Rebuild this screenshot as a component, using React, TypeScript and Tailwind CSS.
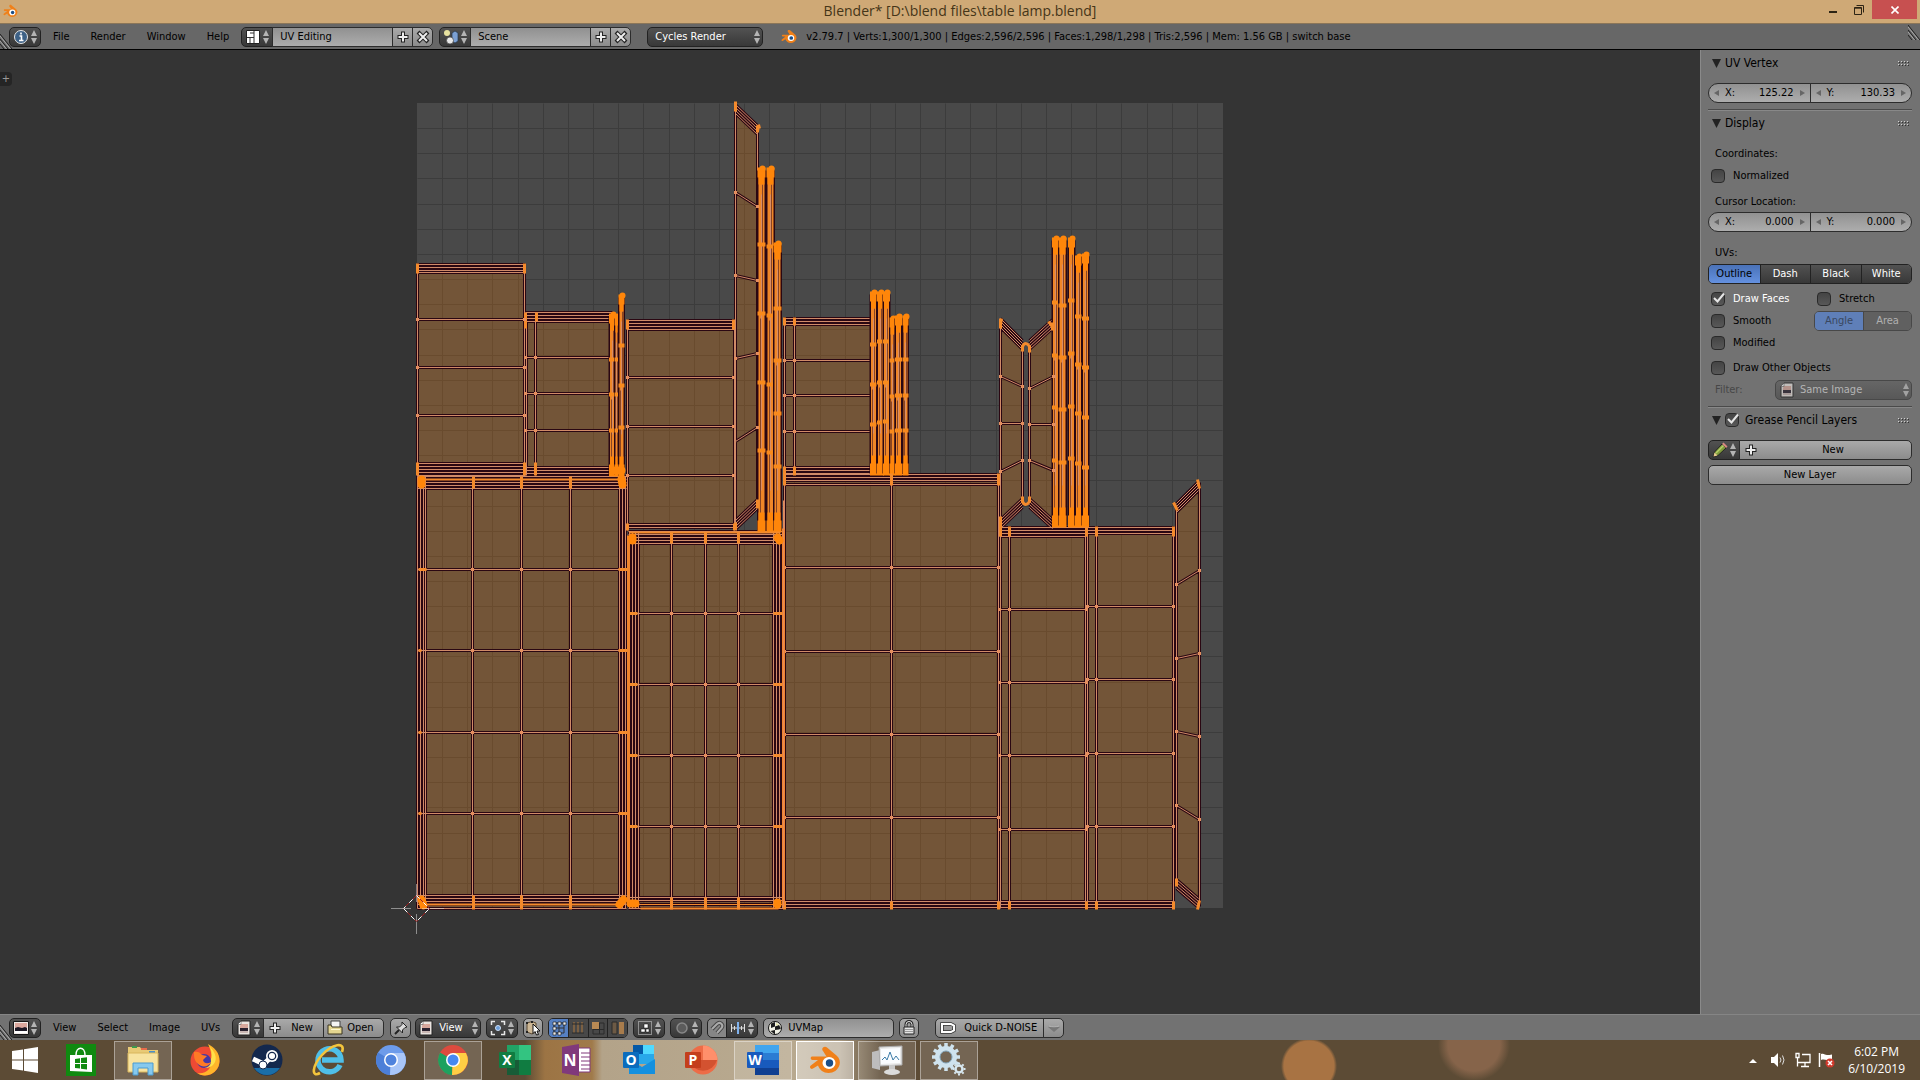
import type { ReactNode } from "react"

type Point = [number, number]
type Segment = [number, number, number, number]

const darkBox = "bg-gradient-to-b from-[#525252] to-[#383838] border border-[#222]"
const lightBox = "bg-gradient-to-b from-[#a9a9a9] to-[#8c8c8c] border border-[#2c2c2c]"
const fieldBox = "bg-gradient-to-b from-[#919191] to-[#adadad] border border-[#2c2c2c]"

/* ---------- UV layout data ---------- */

const GRID = { x: 417, y: 103, size: 805, cells: 32 }

const faces: Point[][] = [
  [[417, 264], [525, 264], [525, 474], [417, 474]],
  [[525, 312], [612, 314], [612, 476], [525, 476]],
  [[627, 320], [734, 320], [734, 528], [627, 528]],
  [[735, 103], [757, 126], [757, 502], [735, 528]],
  [[784, 317], [871, 317], [871, 474], [784, 474]],
  [[784, 474], [999, 474], [999, 908], [784, 908]],
  [[417, 476], [626, 476], [626, 908], [417, 908]],
  [[628, 530], [783, 530], [783, 908], [628, 908]],
  [[1000, 318], [1022, 344], [1022, 500], [1000, 525]],
  [[1029, 344], [1053, 321], [1053, 525], [1029, 500]],
  [[999, 526], [1086, 526], [1086, 908], [999, 908]],
  [[1086, 526], [1174, 526], [1174, 908], [1086, 908]],
  [[1176, 503], [1199, 480], [1199, 908], [1176, 880]],
]

const h = (x1: number, x2: number, ...ys: number[]): Segment[] => ys.map((y) => [x1, y, x2, y])
const v = (y1: number, y2: number, ...xs: number[]): Segment[] => xs.map((x) => [x, y1, x, y2])
const slant = (x1: number, y1: number, x2: number, y2: number, count: number): Segment[] =>
  Array.from({ length: count }, (_, i) => [x1, y1 + i * 3, x2, y2 + i * 3])

const edges: Segment[] = [
  ...h(417, 525, 264, 267, 270, 272, 319, 367, 415, 463, 466, 469, 472, 475),
  ...v(264, 476, 417, 524),
  ...h(525, 612, 312, 315, 318, 321, 357, 393, 430, 467, 470, 473, 476),
  ...v(312, 475, 526, 535),
  ...h(627, 734, 320, 323, 326, 329, 377, 426, 475, 524, 527),
  ...v(320, 530, 627, 734),
  ...v(105, 528, 735),
  ...v(126, 505, 757),
  ...slant(735, 104, 757, 125, 4),
  [735, 192, 757, 206], [735, 275, 757, 280], [735, 358, 757, 353], [735, 441, 757, 427],
  ...slant(735, 520, 757, 499, 4),
  ...h(784, 871, 318, 321, 324, 360, 395, 431, 467, 470, 473),
  ...v(318, 474, 784, 794),
  ...h(784, 999, 474, 477, 480, 484, 567, 651, 734, 817, 901, 904, 907),
  ...v(474, 908, 784, 891, 998),
  ...h(417, 626, 476, 479, 482, 485, 488, 569, 650, 732, 813, 895, 898, 901, 904, 908),
  ...v(476, 908, 417, 420, 423, 425, 472, 521, 570, 619, 622, 625),
  ...h(628, 783, 531, 534, 537, 540, 543, 613, 684, 755, 826, 897, 900, 904, 908),
  ...v(531, 908, 629, 632, 635, 638, 671, 705, 738, 773, 776, 779, 782),
  ...v(320, 526, 1000),
  ...v(345, 502, 1022, 1029),
  ...v(322, 526, 1053),
  ...slant(1000, 318, 1022, 340, 4),
  ...slant(1029, 340, 1052, 319, 4),
  [1000, 376, 1022, 386], [1000, 423, 1022, 423], [1000, 471, 1022, 460],
  [1029, 388, 1053, 376], [1029, 424, 1053, 424], [1029, 460, 1053, 470],
  ...slant(1000, 519, 1022, 498, 4),
  ...slant(1029, 498, 1052, 519, 4),
  ...h(999, 1086, 527, 530, 533, 536, 609, 682, 755, 829, 901, 904, 907),
  ...v(527, 908, 1000, 1009, 1085),
  ...h(1086, 1174, 527, 530, 533, 606, 679, 753, 826, 901, 904, 907),
  ...v(527, 908, 1087, 1096, 1173),
  ...v(505, 882, 1176),
  ...v(482, 906, 1199),
  ...slant(1176, 503, 1198, 481, 4),
  [1176, 584, 1199, 570], [1176, 658, 1199, 653], [1176, 731, 1199, 736], [1176, 805, 1199, 819],
  ...slant(1176, 879, 1198, 898, 4),
]

// tall thin strips, packed so tightly that only the selected edges show
const strips = [
  { x: 612, w: 5, top: 316, bottom: 474, nodes: [359, 394, 430] },
  { x: 616, w: 2, top: 318, bottom: 474, nodes: [359, 394, 430] },
  { x: 621, w: 4, top: 297, bottom: 474, nodes: [345, 385, 427] },
  { x: 761, w: 6, top: 170, bottom: 530, nodes: [244, 313, 382, 450] },
  { x: 770, w: 6, top: 170, bottom: 530, nodes: [246, 315, 384, 452] },
  { x: 777, w: 6, top: 245, bottom: 530, nodes: [308, 360, 413, 466] },
  { x: 873, w: 5, top: 294, bottom: 473, nodes: [344, 384, 424] },
  { x: 880, w: 5, top: 294, bottom: 473, nodes: [341, 382, 422] },
  { x: 886, w: 5, top: 294, bottom: 473, nodes: [341, 382, 421] },
  { x: 892, w: 4, top: 320, bottom: 473, nodes: [360, 396, 431] },
  { x: 898, w: 5, top: 318, bottom: 473, nodes: [359, 395, 430] },
  { x: 905, w: 4, top: 318, bottom: 473, nodes: [359, 395, 430] },
  { x: 1055, w: 5, top: 240, bottom: 525, nodes: [302, 355, 407, 460] },
  { x: 1062, w: 6, top: 240, bottom: 525, nodes: [305, 357, 409, 462] },
  { x: 1071, w: 5, top: 240, bottom: 525, nodes: [300, 353, 406, 458] },
  { x: 1078, w: 5, top: 258, bottom: 525, nodes: [316, 364, 413, 463] },
  { x: 1085, w: 5, top: 256, bottom: 525, nodes: [318, 367, 417, 467] },
]

// corners and joints where many vertices overlap
const joints: Segment[] = [
  ...v(263, 273, 417, 524), ...v(312, 328, 525), ...v(312, 321, 536), ...v(462, 475, 417, 524, 535),
  ...v(319, 329, 627, 733), ...v(523, 530, 627, 734), ...v(101, 111, 735), ...v(125, 132, 757),
  ...v(499, 508, 757), ...v(522, 530, 735), ...v(317, 325, 784, 794), ...v(466, 475, 784, 794),
  ...v(473, 485, 784, 891, 998), ...v(901, 909, 784, 891, 998, 1009, 1086, 1096, 1173),
  ...v(476, 488, 473, 521, 570), ...v(895, 909, 473, 521, 570),
  ...v(532, 543, 671, 705, 738), ...v(897, 909, 671, 705, 738),
  ...v(318, 328, 1000), ...v(322, 330, 1052), ...v(516, 536, 1000), ...v(526, 536, 1009, 1086, 1096, 1173),
  [1173, 502, 1177, 510], [1197, 479, 1199, 488], [1176, 878, 1176, 886], [1199, 900, 1197, 909],
  [1001, 318, 1000, 324], [1048, 321, 1053, 328],
  [758, 124, 759, 128], [757, 131, 758, 125],
  ...h(418, 426, 569), ...h(418, 421, 650, 732, 813), ...h(618, 628, 569, 650, 732, 813),
  ...h(629, 637, 613, 684, 755, 826), ...h(773, 783, 613, 684, 755, 826),
]

const vertices: Point[] = [
  ...[319, 367, 415].flatMap((y): Point[] => [[417, y], [524, y]]),
  ...[357, 393, 430].flatMap((y): Point[] => [[525, y], [535, y]]),
  ...[377, 426, 475].flatMap((y): Point[] => [[627, y], [733, y]]),
  ...[360, 395, 431].flatMap((y): Point[] => [[784, y], [794, y]]),
  ...[567, 651, 734, 817].flatMap((y): Point[] => [[784, y], [891, y], [998, y]]),
  ...[569, 650, 732, 813].flatMap((y): Point[] => [[472, y], [521, y], [570, y]]),
  ...[613, 684, 755, 826].flatMap((y): Point[] => [[671, y], [705, y], [738, y]]),
  ...[609, 682, 755, 829].flatMap((y): Point[] => [[999, y], [1009, y], [1086, y]]),
  ...[606, 679, 753, 826].flatMap((y): Point[] => [[1087, y], [1096, y], [1173, y]]),
  [735, 192], [757, 206], [735, 275], [757, 280], [735, 358], [757, 353], [757, 427],
  [1000, 376], [1022, 386], [1000, 423], [1022, 423], [1000, 471], [1022, 460],
  [1029, 388], [1053, 376], [1029, 424], [1053, 424], [1029, 460], [1053, 470],
  [1176, 584], [1199, 570], [1176, 658], [1199, 653], [1176, 731], [1199, 736], [1176, 805], [1199, 819],
]

const toPath = (segments: Segment[]) => segments.map(([a, b, c, d]) => `M${a} ${b}L${c} ${d}`).join("")

function UvCanvas() {
  const step = GRID.size / GRID.cells
  const gridLines: Segment[] = []
  for (let i = 1; i < GRID.cells; i++) {
    const p = Math.round(i * step)
    gridLines.push([GRID.x + p, GRID.y, GRID.x + p, GRID.y + GRID.size])
    gridLines.push([GRID.x, GRID.y + p, GRID.x + GRID.size, GRID.y + p])
  }
  const edgePath = toPath(edges)

  return (
    <svg viewBox="0 50 1700 964" className="block h-full w-full" role="img" aria-label="UV layout">
      <rect x={GRID.x} y={GRID.y} width={806} height={805} fill="#494949" />
      <g transform="translate(.5 .5)" fill="none">
        <path d={toPath(gridLines)} stroke="#3c3c3c" />
        <g fill="#ff7d00" fillOpacity=".23">
          {faces.map((points, i) => (
            <polygon key={i} points={points.join(" ")} />
          ))}
        </g>
        <path d={edgePath} stroke="#2a0712" strokeWidth="3" />
        <path d={edgePath} stroke="#d08a68" />

        {/* packed strips */}
        {strips.map(({ x, w, top, bottom, nodes }) => (
          <g key={x}>
            <path d={`M${x} ${top}V${bottom}`} stroke="#2a0712" strokeWidth={w + 3} />
            <path d={`M${x} ${top}V${bottom}`} stroke="#ef8628" strokeWidth={w} />
            <path d={`M${x + 1} ${top + 14}V${nodes[1]}M${x - 1} ${nodes[1] + 5}V${bottom - 14}`} stroke="#8a4522" />
            <path d={`M${x} ${top + 24}V${bottom - 40}`} stroke="#d98d66" />
            {nodes.map((y) => (
              <path key={y} d={`M${x - w / 2 - 1} ${y}H${x + w / 2 + 1}`} stroke="#f98a1c" strokeWidth="4" />
            ))}
            <path
              d={`M${x} ${top - 3}V${top + 7}M${x} ${bottom - 10}V${bottom + 2}`}
              stroke="#ff860a"
              strokeWidth={w + 2}
            />
            <path d={`M${x} ${top + 5}V${top + 14}M${x} ${bottom - 18}V${bottom - 8}`} stroke="#ff860a" strokeWidth={w} />
            <circle cx={x + 1} cy={top - 2} r="3" fill="#ff860a" />
          </g>
        ))}

        <path d={toPath(joints)} stroke="#f48a2c" strokeWidth="3" />
        {vertices.map(([x, y], i) => (
          <rect key={i} x={x - 1.5} y={y - 1.5} width="3" height="3" fill="#e58e5e" />
        ))}
        <path
          d="M1022 351V346Q1025 340 1029 346V352M1022 496V501Q1025 507 1029 501V496"
          stroke="#f48a2c"
          strokeWidth="3"
        />

        {/* seams between the big islands */}
        <path d="M628 535V905M783 528V905" stroke="#f0852e" strokeWidth="3" />
        <path d="M629 532H780M640 908H778M424 479H620M426 904H616" stroke="#f48a2c" strokeWidth="2" />
        <path d="M640 904H778" stroke="#f48a2c" />
        <path d="M783 500V906" stroke="#e8895a" />
        <g stroke="#ff860a" strokeWidth="8" strokeLinecap="round">
          <path d="M421 479V484M421 899L423 905M621 479L622 484M619 904L623 899" />
          <path d="M632 537V540M777 537L779 540M630 903H635M777 902V904" />
          <path d="M614 470H621" />
        </g>

        {/* 2D cursor */}
        <path d="M391 908H411M422 908H443M416 884V902M416 914V934" stroke="#e8e8e8" strokeDasharray="1 1" />
        <path d="M403 908L416 895L429 908L416 921Z" stroke="#a02020" />
        <path d="M403 908L416 895L429 908L416 921Z" stroke="#fff" strokeDasharray="5 5" strokeDashoffset="2" />
      </g>
    </svg>
  )
}

/* ---------- small drawings ---------- */

function UpDown({ className = "" }: { className?: string }) {
  return (
    <svg viewBox="0 0 6 14" className={`h-[14px] w-[6px] shrink-0 fill-[#b4b4b4] ${className}`} aria-hidden="true">
      <path d="M3 0L6 6H0ZM3 14L6 8H0Z" />
    </svg>
  )
}

function Icon({ children }: { children: ReactNode }) {
  return (
    <svg viewBox="0 0 16 16" className="size-4 shrink-0" fill="none" aria-hidden="true">
      {children}
    </svg>
  )
}

const PlusIcon = () => (
  <Icon>
    <path d="M8 2.5v11M2.5 8h11" stroke="#222" strokeWidth="4" />
    <path d="M8 3.5v9M3.5 8h9" stroke="#eee" strokeWidth="2" />
  </Icon>
)

const CrossIcon = () => (
  <Icon>
    <path d="M3 3l10 10M13 3L3 13" stroke="#222" strokeWidth="4" />
    <path d="M4 4l8 8M12 4l-8 8" stroke="#eee" strokeWidth="2" />
  </Icon>
)

const ImageIcon = () => (
  <Icon>
    <path d="M5 1h9v14H2V4Z" fill="#e9e4e0" stroke="#222" />
    <path d="M5 4h7v4H4V6Z" fill="#d7a79c" />
    <path d="M4 8h8v3H4Z" fill="#2a2230" />
    <path d="M4 11h8v2H4Z" fill="#c9b7b4" />
    <path d="M1.5 4.5L5 1v3.5Z" fill="#fff" stroke="#333" strokeWidth=".5" />
  </Icon>
)

const ImageEditorIcon = () => (
  <Icon>
    <path d="M.5 1.5h15v13H.5Z" fill="#f0e9e6" stroke="#181818" />
    <path d="M2 3h12v5H2Z" fill="#dba79d" />
    <path d="M2 8l3-1 4 1 3-1 2 1v3H2Z" fill="#1d1926" />
    <path d="M2 11h12v2H2Z" fill="#fff" />
  </Icon>
)

const BlenderIcon = ({ className }: { className: string }) => (
  <svg viewBox="0 0 32 30" className={className} fill="none" aria-hidden="true">
    <path
      d="M14 2.5c1-1 3-1 4 0l9.500 8c3 2.500 4 6 3 9.500-1.500 5-6 8-11 8s-9-3-10.500-7.500L4 23.500c-2 1.500-4-1-2.500-2.700L9 15H3.500c-2 0-2.500-3-.5-3.500h14.500L14 6c-1-1-1-2.500 0-3.500Z"
      fill="#f08019"
    />
    <ellipse cx="20" cy="18" rx="6.5" ry="6" fill="#fff" />
    <circle cx="20.5" cy="18" r="3.7" fill="#1b4e87" />
  </svg>
)

const Corner = () => (
  <svg viewBox="0 0 12 16" className="h-4 w-3" aria-hidden="true">
    <path d="M0 1L12 16M0 6L8 16M0 11L4 16" stroke="#222" />
    <path d="M0 3L10.500 16M0 8L6.500 16" stroke="#aaa" />
  </svg>
)

function MenuButtons({ items }: { items: string[] }) {
  return (
    <nav className="ml-3 flex gap-[21px]">
      {items.map((item) => (
        <button key={item} type="button">
          {item}
        </button>
      ))}
    </nav>
  )
}

function Selector({ label, children, className = "rounded-[5px]" }: { label: string; children: ReactNode; className?: string }) {
  return (
    <button
      type="button"
      aria-label={label}
      className={`flex h-5 w-8 shrink-0 items-center justify-center gap-[2px] ${darkBox} ${className}`}
    >
      {children}
      <UpDown />
    </button>
  )
}

function DataBlock({ label, value, icon }: { label: string; value: string; icon: ReactNode }) {
  return (
    <div className="flex">
      <Selector label={`Browse ${label}`} className="rounded-l-[5px]">
        {icon}
      </Selector>
      <input aria-label={label} defaultValue={value} className={`-ml-px h-5 w-[121px] px-[7px] ${fieldBox}`} />
      <button type="button" aria-label={`Add ${label}`} className={`-ml-px flex h-5 w-[21px] items-center justify-center ${lightBox}`}>
        <PlusIcon />
      </button>
      <button
        type="button"
        aria-label={`Delete ${label}`}
        className={`-ml-px flex h-5 w-[21px] items-center justify-center rounded-r-[5px] ${lightBox}`}
      >
        <CrossIcon />
      </button>
    </div>
  )
}

/* ---------- window title and info header ---------- */

function TitleBar() {
  return (
    <header className="relative h-[23px] shrink-0 bg-[#cfa976] font-['Open_Sans','Noto_Sans',sans-serif]">
      <BlenderIcon className="absolute top-1 left-[3px] h-[14px] w-[15px]" />
      <h1 className="text-center text-[14px] leading-[22px] text-[#453518]">Blender* [D:\blend files\table lamp.blend]</h1>
      <div className="absolute top-0 right-[3px] flex h-[19px]">
        <button type="button" aria-label="Minimize" className="flex w-[26px] items-center justify-center">
          <span className="mt-1 h-[2px] w-2 bg-[#2d2414]" />
        </button>
        <button type="button" aria-label="Restore" className="flex w-[26px] items-center justify-center">
          <svg viewBox="0 0 10 10" className="size-[10px]" fill="none" stroke="#2d2414" aria-hidden="true">
            <path d="M.5 2.5h7v7h-7Z" />
            <path d="M.5 3.2h7" />
            <path d="M2.5 .5h7v7" />
          </svg>
        </button>
        <button type="button" aria-label="Close" className="flex w-[45px] items-center justify-center bg-[#c75050]">
          <svg viewBox="0 0 8 8" className="size-2" stroke="#fff" strokeWidth="1.6" aria-hidden="true">
            <path d="M.5 .5l7 7M7.5 .5l-7 7" />
          </svg>
        </button>
      </div>
    </header>
  )
}

function InfoHeader() {
  return (
    <div className="relative flex h-[27px] shrink-0 items-center border-t border-b border-t-[#8b7659] border-b-black bg-[#676767] pl-[9px]">
      <span className="absolute bottom-0 left-0">
        <Corner />
      </span>
      <Selector label="Editor type">
        <Icon>
          <circle cx="8" cy="8" r="6.5" fill="#3d6186" stroke="#e6e6e6" />
          <path d="M8 3.5v2M6.5 7h2v4M6 11.5h4.5" stroke="#fff" strokeWidth="1.6" />
        </Icon>
      </Selector>
      <MenuButtons items={["File", "Render", "Window", "Help"]} />
      <div className="ml-3 flex gap-[6px]">
        <DataBlock
          label="screen layout"
          value="UV Editing"
          icon={
            <Icon>
              <path d="M1.5 1.5h13v13h-13Z" fill="#fff" stroke="#222" />
              <path d="M9 2v12M2 8.500h7M5 8.500v5.500M5 4h4" stroke="#333" />
            </Icon>
          }
        />
        <DataBlock
          label="scene"
          value="Scene"
          icon={
            <Icon>
              <circle cx="4" cy="4" r="3" fill="#e7e2a0" />
              <path d="M9 4l3-2 3 2v8l-3 2-3-2Z" fill="#7ba0d4" stroke="#24384f" strokeWidth=".7" />
              <circle cx="7" cy="11.5" r="3.5" fill="#e8e8e8" stroke="#444" strokeWidth=".7" />
            </Icon>
          }
        />
      </div>
      <div className="relative ml-4">
        <select
          aria-label="Render engine"
          className={`block h-5 w-[116px] appearance-none rounded-[5px] px-[7px] text-white ${darkBox}`}
        >
          <option>Cycles Render</option>
        </select>
        <UpDown className="pointer-events-none absolute top-[3px] right-[3px]" />
      </div>
      <BlenderIcon className="ml-[18px] h-[15px] w-4" />
      <p className="ml-[9px] whitespace-nowrap">
        v2.79.7 | Verts:1,300/1,300 | Edges:2,596/2,596 | Faces:1,298/1,298 | Tris:2,596 | Mem: 1.56 GB | switch base
      </p>
      <span className="absolute top-0 right-0">
        <Corner />
      </span>
    </div>
  )
}

/* ---------- properties region ---------- */

function PanelTitle({ title, check }: { title: string; check?: boolean }) {
  return (
    <div className="flex h-6 items-center pl-1 text-[12px]">
      <svg viewBox="0 0 9 9" className="mr-1 size-[9px] fill-[#222]" aria-hidden="true">
        <path d="M0 0H9L4.500 9Z" />
      </svg>
      {check ? (
        <label className="flex items-center gap-[6px]">
          <CheckBox checked />
          {title}
        </label>
      ) : (
        <h2>{title}</h2>
      )}
      <svg viewBox="0 0 12 6" className="mr-[2px] ml-auto h-[6px] w-3" aria-hidden="true">
        <path d="M0 1.5H12M0 4.5H12" stroke="#d0d0d0" strokeDasharray="1 2" />
        <path d="M1 2.5H12M1 5.5H12" stroke="#333" strokeDasharray="1 2" />
      </svg>
    </div>
  )
}

function CheckBox({ checked = false }: { checked?: boolean }) {
  return (
    <span className="relative block size-[14px]">
      <input
        type="checkbox"
        defaultChecked={checked}
        className="peer block size-[14px] appearance-none rounded-[4px] border border-[#2a2a2a] bg-gradient-to-b from-[#444] to-[#585858]"
      />
      <svg
        viewBox="0 0 14 14"
        className="pointer-events-none absolute top-0 left-0 hidden size-[14px] overflow-visible peer-checked:block"
        fill="none"
        stroke="#e6e6e6"
        strokeWidth="2"
        aria-hidden="true"
      >
        <path d="M3 6l3.500 3.500L13 1.500" />
      </svg>
    </span>
  )
}

function Check({ label, checked = false }: { label: string; checked?: boolean }) {
  return (
    <label className={`flex items-center gap-2 pl-[3px] ${checked ? "text-white" : ""}`}>
      <CheckBox checked={checked} />
      {label}
    </label>
  )
}

function NumberPair({ x, y, name }: { x: string; y: string; name: string }) {
  const parts = [
    { axis: "X", value: x, shape: "rounded-l-full" },
    { axis: "Y", value: y, shape: "-ml-px rounded-r-full" },
  ]
  return (
    <div className="flex h-5">
      {parts.map(({ axis, value, shape }) => (
        <label key={axis} className={`flex min-w-0 flex-1 items-center px-[5px] ${fieldBox} ${shape}`}>
          <svg viewBox="0 0 5 6" className="h-[6px] w-[5px] fill-[#666]" aria-hidden="true">
            <path d="M5 0V6L0 3Z" />
          </svg>
          <span className="ml-[6px]">{axis}:</span>
          <input
            aria-label={`${name} ${axis}`}
            defaultValue={value}
            className="mr-[6px] w-0 min-w-0 flex-1 bg-transparent text-right"
          />
          <svg viewBox="0 0 5 6" className="h-[6px] w-[5px] fill-[#666]" aria-hidden="true">
            <path d="M0 0V6L5 3Z" />
          </svg>
        </label>
      ))}
    </div>
  )
}

function PropertiesRegion() {
  return (
    <aside className="w-[220px] shrink-0 border-l border-[#8a8a8a] bg-[#727272] pt-px pr-2 pl-[7px]">
      <section className="h-[59px] border-b border-[#4a4a4a]">
        <PanelTitle title="UV Vertex" />
        <div className="mt-2">
          <NumberPair name="UV vertex" x="125.22" y="130.33" />
        </div>
      </section>

      <section className="h-[297px] border-t border-b border-t-[#888] border-b-[#4a4a4a]">
        <PanelTitle title="Display" />
        <p className="mt-[9px] h-5 pl-[7px] leading-5">Coordinates:</p>
        <div className="flex h-6 items-center">
          <Check label="Normalized" />
        </div>
        <p className="mt-1 h-5 pl-[7px] leading-5">Cursor Location:</p>
        <NumberPair name="Cursor" x="0.000" y="0.000" />
        <p className="mt-[11px] h-5 pl-[7px] leading-5">UVs:</p>
        <div className="mt-px grid h-5 grid-cols-4 overflow-hidden rounded-[5px] border border-[#222]">
          <button type="button" aria-pressed="true" className="bg-gradient-to-b from-[#4a72b8] to-[#6491e0]">
            Outline
          </button>
          {["Dash", "Black", "White"].map((item) => (
            <button
              key={item}
              type="button"
              className="border-l border-[#222] bg-gradient-to-b from-[#525252] to-[#383838] text-white"
            >
              {item}
            </button>
          ))}
        </div>
        <div className="mt-1 flex h-[22px] items-center">
          <Check label="Draw Faces" checked />
          <div className="ml-auto w-[98px]">
            <Check label="Stretch" />
          </div>
        </div>
        <div className="flex h-[22px] items-center">
          <Check label="Smooth" />
          <div className="ml-auto grid h-5 w-[98px] grid-cols-2 overflow-hidden rounded-[5px] border border-[#484848]">
            <button type="button" disabled className="bg-[#5f7fb8] text-[#39475f]">
              Angle
            </button>
            <button type="button" disabled className="border-l border-[#484848] bg-[#606060] text-[#b0b0b0]">
              Area
            </button>
          </div>
        </div>
        <div className="flex h-[22px] items-center">
          <Check label="Modified" />
        </div>
        <div className="mt-[3px] flex h-[22px] items-center">
          <Check label="Draw Other Objects" />
        </div>
        <div className="mt-px flex h-5 items-center">
          <label htmlFor="filter" className="pl-[7px] text-[#474747]">
            Filter:
          </label>
          <div className="relative ml-auto">
            <select
              id="filter"
              disabled
              className="block h-5 w-[137px] appearance-none rounded-[5px] border border-[#484848] bg-gradient-to-b from-[#666] to-[#585858] pl-[24px] text-[#b4b4b4] opacity-100"
            >
              <option>Same Image</option>
            </select>
            <span className="pointer-events-none absolute top-[2px] left-1 opacity-70">
              <ImageIcon />
            </span>
            <UpDown className="pointer-events-none absolute top-[3px] right-[3px] opacity-80" />
          </div>
        </div>
      </section>

      <section className="border-t border-[#888]">
        <PanelTitle title="Grease Pencil Layers" check />
        <div className="mt-2 flex">
          <Selector label="Browse grease pencil" className="rounded-l-[5px]">
            <Icon>
              <path d="M1 15l1.500-5L10 2l4 4-8 7.500Z" fill="#7f9a3c" stroke="#222" />
              <path d="M4 11l7.500-7.500" stroke="#b6cf68" strokeWidth="1.500" />
              <path d="M1.500 14.500l1-4 3 3Z" fill="#e8c890" />
              <path d="M10 2l4 4 1.500-1.500-4-4Z" fill="#d88a80" />
            </Icon>
          </Selector>
          <button type="button" className={`-ml-px flex h-5 flex-1 items-center rounded-r-[5px] pl-[3px] ${lightBox}`}>
            <PlusIcon />
            <span className="flex-1 pr-[4px] text-center">New</span>
          </button>
        </div>
        <button type="button" className={`mt-[5px] block h-5 w-full rounded-[5px] ${lightBox}`}>
          New Layer
        </button>
      </section>
    </aside>
  )
}

/* ---------- image editor header ---------- */

function EditorHeader() {
  return (
    <div className="relative flex h-[26px] shrink-0 items-center border-t border-[#858585] bg-[#727272] pl-[9px]">
      <span className="absolute bottom-0 left-0">
        <Corner />
      </span>
      <Selector label="Editor type">
        <ImageEditorIcon />
      </Selector>
      <MenuButtons items={["View", "Select", "Image", "UVs"]} />

      <div className="ml-3 flex">
        <Selector label="Browse image" className="rounded-l-[5px]">
          <ImageIcon />
        </Selector>
        <button type="button" className={`-ml-px flex h-5 w-[61px] items-center gap-2 pl-[3px] ${lightBox}`}>
          <PlusIcon />
          New
        </button>
        <button type="button" className={`-ml-px flex h-5 w-[61px] items-center gap-1 rounded-r-[5px] pl-[3px] ${lightBox}`}>
          <Icon>
            <path d="M4 1h9v7H4Z" fill="#f4f4f4" stroke="#444" />
            <path d="M1 5h3l1 2h10v7H1Z" fill="#e3d590" stroke="#3a3520" />
            <path d="M4 9.5h9" stroke="#fff8d0" />
          </Icon>
          Open
        </button>
      </div>
      <button type="button" aria-label="Pin" className={`ml-[6px] flex h-5 w-[21px] items-center justify-center rounded-[5px] ${lightBox}`}>
        <Icon>
          <path d="M2 14l4-4" stroke="#222" strokeWidth="2" />
          <path d="M9 2l5 5-2 .5-2.500 2.500v3L3.500 7h3L9 4.500Z" fill="#ddd" stroke="#222" />
        </Icon>
      </button>
      <div className="relative ml-1">
        <select aria-label="Mode" className={`block h-5 w-[66px] appearance-none rounded-[5px] pl-[23px] text-white ${darkBox}`}>
          <option>View</option>
        </select>
        <span className="pointer-events-none absolute top-[2px] left-[3px]">
          <ImageIcon />
        </span>
        <UpDown className="pointer-events-none absolute top-[3px] right-[3px]" />
      </div>
      <div className="ml-[5px] flex">
        <Selector label="Pivot">
          <Icon>
            <path d="M1.5 5V1.5H5M11 1.5h3.5V5M14.5 11v3.5H11M5 14.5H1.5V11" stroke="#e8e8e8" strokeWidth="1.5" />
            <circle cx="8" cy="8" r="2.5" fill="#6d9fdc" stroke="#cfe0f5" />
          </Icon>
        </Selector>
      </div>
      <button type="button" aria-label="Sync selection" className={`ml-[5px] flex h-5 w-5 items-center justify-center rounded-[5px] ${lightBox}`}>
        <Icon>
          <path d="M2 3l5-1.500L11 3v9l-4 2-5-2Z" fill="#cdb795" stroke="#5d4b33" />
          <path d="M1 2h2v2H1ZM6 1h2v2H6ZM1 11h2v2H1Z" fill="#222" />
          <path d="M8 4l7 7h-3l1.500 3.500-2 .5-1.500-3.500-2 2Z" fill="#fff" stroke="#111" />
        </Icon>
      </button>
      <div className="ml-[5px] flex h-5 w-20 overflow-hidden rounded-[5px] border border-[#222]">
        <button type="button" aria-label="Vertex" className="flex flex-1 items-center justify-center bg-[#5680c2]">
          <Icon>
            <path d="M3 3h10v10H3ZM8 3v10M3 8h10" stroke="#333" />
            <path d="M2 2h3v3H2ZM7 2h3v3H7ZM12 2h3v3h-3ZM2 7h3v3H2ZM2 12h3v3H2ZM7 12h3v3H7Z" fill="#eee" stroke="#111" strokeWidth=".6" />
          </Icon>
        </button>
        <button type="button" aria-label="Edge" className="flex flex-1 items-center justify-center border-l border-[#222] bg-[#484848]">
          <Icon>
            <path d="M4 2v11M8 2v11M12 2v11" stroke="#8c6842" strokeWidth="1.5" />
            <path d="M2 4h12M2 13h12" stroke="#2a2a2a" />
          </Icon>
        </button>
        <button type="button" aria-label="Face" className="flex flex-1 items-center justify-center border-l border-[#222] bg-[#484848]">
          <Icon>
            <path d="M3 3h11v11H3ZM9.500 3v11M3 9.500h11" stroke="#2a2a2a" />
            <path d="M2 2h7v7H2Z" fill="#b98a54" />
          </Icon>
        </button>
        <button type="button" aria-label="Island" className="flex flex-1 items-center justify-center border-l border-[#222] bg-[#484848]">
          <Icon>
            <path d="M2 2h5v12H2Z" fill="#6d5a45" stroke="#2a2a2a" />
            <path d="M9 2h5v12H9Z" fill="#a87c4c" />
          </Icon>
        </button>
      </div>
      <div className="ml-[5px] flex gap-[5px]">
        <Selector label="Sticky selection">
          <Icon>
            <path d="M1.5 1.5h13v13h-13Z" stroke="#ddd" strokeDasharray="1 1" />
            <path d="M7 4h4v4H7ZM4 9h4v3H4ZM9 9h3v3H9Z" fill="#fff" stroke="#111" strokeWidth=".5" />
          </Icon>
        </Selector>
        <Selector label="Proportional editing">
          <Icon>
            <circle cx="8" cy="8" r="5" fill="#5c5c5c" stroke="#888" strokeWidth="1.5" />
          </Icon>
        </Selector>
        <div className="flex">
          <button type="button" aria-label="Snap" className="flex h-5 w-5 items-center justify-center rounded-l-[5px] border border-[#222] bg-[#868686]">
            <Icon>
              <path d="M3 9l5-5c3-3 7 1 4.500 4L8 13" stroke="#444" strokeWidth="4" />
              <path d="M3 9l5-5c3-3 7 1 4.500 4L8 13" stroke="#aaa" strokeWidth="2" />
            </Icon>
          </button>
          <Selector label="Snap element" className="-ml-px rounded-r-[5px]">
            <Icon>
              <path d="M1.5 4v8M4.5 6v4M11.5 6v4M14.5 4v8M1 8h14" stroke="#ddd" />
              <path d="M8 2v12" stroke="#7fb2ee" strokeWidth="2" />
            </Icon>
          </Selector>
        </div>
        <label className={`flex h-5 w-[131px] items-center gap-[5px] rounded-[5px] pl-[3px] ${fieldBox}`}>
          <Icon>
            <circle cx="8" cy="8" r="6.5" fill="#f2f2e6" stroke="#111" />
            <path d="M4 3.500L8 2v4.500L4 8ZM8 6.500L12 5l2 3.500-2 1L8 10ZM3.500 11L8 10v4.500Z" fill="#1c1c1c" />
            <path d="M9 3l3 1.500-3 1.500Z" fill="#e6e6a8" />
          </Icon>
          <input aria-label="UV map" defaultValue="UVMap" className="w-0 flex-1 bg-transparent" />
        </label>
        <button type="button" aria-label="Lock" className={`flex h-5 w-5 items-center justify-center rounded-[5px] ${lightBox}`}>
          <Icon>
            <path d="M5 7V4.500a3 3 0 0 1 6 0V7" stroke="#222" strokeWidth="3" />
            <path d="M5 7V4.500a3 3 0 0 1 6 0V7" stroke="#eee" />
            <path d="M3 7h10v7H3Z" fill="#e4e4e4" stroke="#222" />
            <path d="M4 9.5h8M4 11.5h8" stroke="#999" />
          </Icon>
        </button>
      </div>
      <div className="ml-4 flex">
        <button type="button" className={`flex h-5 w-[109px] items-center gap-2 rounded-l-[5px] pl-1 whitespace-nowrap ${lightBox}`}>
          <Icon>
            <path d="M2 4h9l3 1.500v5L11 12H2Z" stroke="#333" strokeWidth="3.5" />
            <path d="M2 4h9l3 1.500v5L11 12H2Z" stroke="#fff" strokeWidth="2" />
          </Icon>
          Quick D-NOISE
        </button>
        <button type="button" aria-label="D-NOISE options" className={`-ml-px flex h-5 w-[21px] items-center justify-center rounded-r-[5px] ${lightBox}`}>
          <Icon>
            <path d="M2 7c2-1 10-1 12 0l-6 5Z" fill="#777" />
            <path d="M3 6c2 1 8 1 10 0" stroke="#b5b5b5" />
          </Icon>
        </button>
      </div>
    </div>
  )
}

/* ---------- Windows taskbar ---------- */

const gear = (cx: number, cy: number, r: number, teeth: number) =>
  Array.from({ length: teeth }, (_, i) => {
    const a = (i * 2 * Math.PI) / teeth
    return `M${cx + Math.cos(a) * r * 0.7} ${cy + Math.sin(a) * r * 0.7}L${cx + Math.cos(a) * r} ${cy + Math.sin(a) * r}`
  }).join("")

function OfficeMark({ letter, color }: { letter: string; color: string }) {
  return (
    <g>
      <rect x="0" y="8" width="16" height="16" rx="1" fill={color} />
      <text x="8" y="21" textAnchor="middle" fill="#fff" fontSize="14" fontWeight="700" fontFamily="Open Sans, Noto Sans, sans-serif">
        {letter}
      </text>
    </g>
  )
}

const apps: { name: string; frame?: "open" | "active"; art: ReactNode }[] = [
  {
    name: "Store",
    art: (
      <>
        <path d="M1 0h30v32H1Z" fill="#108a10" />
        <path d="M5 11h22v17l-22-1Z" fill="#fff" />
        <path d="M11 11c0-9 9-9 9 0" stroke="#fff" strokeWidth="1.5" />
        <path d="M10 15l5-.7V19h-5ZM16 14l6-.8V19h-6ZM10 20h5v4.500l-5-.6ZM16 20h6v5.500l-6-.8Z" fill="#108a10" />
      </>
    ),
  },
  {
    name: "File Explorer",
    frame: "open",
    art: (
      <>
        <path d="M1 3h12l2 3h16v8H1Z" fill="#e8ca76" />
        <path d="M5 2h5v2H5Z" fill="#3f9a4c" />
        <path d="M14 4h6v2h-6Z" fill="#e76c4b" />
        <path d="M22 7h6v2h-6Z" fill="#4a90c8" />
        <path d="M1 9h30v19H1Z" fill="#f7e3a0" stroke="#d9b65c" />
        <path d="M6 31V19h20v12h-5v-7H11v7Z" fill="#86c9ee" stroke="#4a9bd0" />
      </>
    ),
  },
  {
    name: "Firefox",
    art: (
      <>
        <circle cx="16" cy="17" r="14.5" fill="#ef4a34" />
        <path d="M19 0c7 4 12 9 11.500 18A14.500 14.500 0 0 1 8 29c14 2 19-12 11-29Z" fill="#ffb52a" />
        <path d="M20 2c5 6 3 18-5 22 10 1 18-10 5-22Z" fill="#ffe04a" />
        <circle cx="15" cy="17" r="7" fill="#4537a5" />
        <path d="M5 8c3-1 6 0 8 3l5 1-4 4c1 4 5 4 8 2-2 5-9 6-13 2S5 13 5 8Z" fill="#ff7a25" />
      </>
    ),
  },
  {
    name: "Steam",
    art: (
      <>
        <circle cx="16" cy="16" r="15.5" fill="#13284d" />
        <path d="M3 24a15.500 15.500 0 0 0 26 0Z" fill="#1a6ea8" />
        <path d="M2 15l11 5 8-8" stroke="#fff" strokeWidth="5" />
        <circle cx="21" cy="12" r="6" fill="#fff" />
        <circle cx="21" cy="12" r="3.7" fill="#fff" stroke="#13284d" strokeWidth="1.3" />
        <circle cx="12" cy="21" r="4" fill="#fff" stroke="#13284d" />
      </>
    ),
  },
  {
    name: "Internet Explorer",
    art: (
      <>
        <path d="M27 21a11.500 11.500 0 1 1 1-5H9" stroke="#4fbfe8" strokeWidth="5.5" />
        <path d="M7 29C-2 34-1 22 9 11S33-3 29 8" stroke="#f3c43c" strokeWidth="2.6" />
      </>
    ),
  },
  {
    name: "Chromium",
    art: (
      <>
        <circle cx="16" cy="16" r="15" fill="#6d9bea" />
        <path d="M16 16L3 8.500A15 15 0 0 0 15 31Z" fill="#4c7fd8" />
        <path d="M16 9h13a15 15 0 0 1-14 22Z" fill="#a9c6f8" />
        <circle cx="16" cy="16" r="7" fill="#fff" />
        <circle cx="16" cy="16" r="5.5" fill="#4f83dd" />
      </>
    ),
  },
  {
    name: "Chrome",
    frame: "open",
    art: (
      <>
        <circle cx="16" cy="16" r="15" fill="#dd4b3e" />
        <path d="M16 16L3 8.500A15 15 0 0 0 15 31Z" fill="#1da15f" />
        <path d="M16 9h13a15 15 0 0 1-14 22Z" fill="#ffce44" />
        <circle cx="16" cy="16" r="7" fill="#fff" />
        <circle cx="16" cy="16" r="5.5" fill="#4688f1" />
      </>
    ),
  },
  {
    name: "Excel",
    art: (
      <>
        <path d="M8 1h12v30H8Z" fill="#21a366" />
        <path d="M20 1h12v15H20Z" fill="#33c481" />
        <path d="M8 16h12v15H8Z" fill="#185c37" />
        <path d="M20 16h12v15H20Z" fill="#107c41" />
        <OfficeMark letter="X" color="#107c41" />
      </>
    ),
  },
  {
    name: "OneNote",
    art: (
      <>
        <path d="M17 4h12v24H17Z" fill="#fff" stroke="#80397b" />
        <path d="M20 9h9M20 13h9M20 17h9M20 21h9M20 25h9" stroke="#80397b" />
        <path d="M1 3l17-3v32L1 29Z" fill="#80397b" />
        <text x="9" y="22" textAnchor="middle" fill="#fff" fontSize="16" fontWeight="700" fontFamily="Open Sans, Noto Sans, sans-serif">
          N
        </text>
      </>
    ),
  },
  {
    name: "Outlook",
    art: (
      <>
        <path d="M10 1h21v19H10Z" fill="#28a8ea" />
        <path d="M10 1h10v9H10Z" fill="#0358a7" />
        <path d="M20 1h11v9H20Z" fill="#50d9ff" />
        <path d="M6 15l13 8 13-8v15H6Z" fill="#1490df" />
        <OfficeMark letter="O" color="#0a6cbd" />
      </>
    ),
  },
  {
    name: "PowerPoint",
    art: (
      <>
        <circle cx="18" cy="16" r="14.5" fill="#ed6c47" />
        <path d="M18 1.500A14.500 14.500 0 0 1 32.500 16H18Z" fill="#ff8f6b" />
        <path d="M32 16a14.500 14.500 0 0 1-28 0Z" fill="#d35230" />
        <OfficeMark letter="P" color="#c43e1c" />
      </>
    ),
  },
  {
    name: "Word",
    frame: "open",
    art: (
      <>
        <path d="M8 1h24v8H8Z" fill="#41a5ee" />
        <path d="M8 9h24v7H8Z" fill="#2b7cd3" />
        <path d="M8 16h24v8H8Z" fill="#185abd" />
        <path d="M8 24h24v7H8Z" fill="#103f91" />
        <OfficeMark letter="W" color="#185abd" />
      </>
    ),
  },
  { name: "Blender", frame: "active", art: null },
  {
    name: "Task Manager",
    frame: "open",
    art: (
      <>
        <path d="M1 8l8-2v20l-8-2Z" fill="#bdbdbd" />
        <path d="M8 3l23-1v19l-22 1Z" fill="#e8e8e8" stroke="#aaa" />
        <path d="M10 5l19-1v15l-19 1Z" fill="#fbfdff" />
        <path d="M11 16l3-3 2 3 3-8 3 8 3-4 3 4" stroke="#3a7ba8" />
        <path d="M18 21h6v6h-6Z" fill="#c9c9c9" />
        <ellipse cx="21" cy="28" rx="8" ry="3" fill="#dcdcdc" />
      </>
    ),
  },
  {
    name: "Services",
    frame: "open",
    art: (
      <>
        <circle cx="13" cy="13" r="8.5" stroke="#cfe3ee" strokeWidth="5" />
        <path d={gear(13, 13, 14, 12)} stroke="#cfe3ee" strokeWidth="3.5" />
        <circle cx="13" cy="13" r="6" stroke="#7f9fb3" />
        <circle cx="26" cy="25" r="3.5" stroke="#d8e8f0" strokeWidth="2.5" />
        <path d={gear(26, 25, 6.5, 8)} stroke="#d8e8f0" strokeWidth="2" />
      </>
    ),
  },
]

function Taskbar() {
  return (
    <footer className="flex h-10 shrink-0 items-center bg-[#5c4b35] bg-[radial-gradient(circle_at_1309px_26px,#a87343_0_25px,transparent_28px),radial-gradient(circle_at_1474px_5px,#86644a_0_26px,transparent_36px),linear-gradient(to_right,transparent_525px,#9c7444_545px,#a07a4a_592px,#b3a389_602px,#b9aa90_790px,#a99a82_840px,transparent_880px)] pr-[15px] font-['Open_Sans','Noto_Sans',sans-serif] text-white">
      <button type="button" aria-label="Start" className="mr-[14px] ml-[12px] flex w-[26px] items-center justify-center">
        <svg viewBox="0 0 26 26" className="size-[26px] fill-white" aria-hidden="true">
          <path d="M0 4l11-1.500V12.500H0ZM12 2.300L26 0v12.500H12ZM0 13.500h11v10L0 22ZM12 13.500h14V26l-14-2.200Z" />
        </svg>
      </button>
      <div className="flex gap-1">
        {apps.map(({ name, frame, art }) => (
          <button
            key={name}
            type="button"
            aria-label={name}
            className={`flex h-[39px] w-[58px] items-center justify-center ${
              frame === "active"
                ? "border border-white bg-white/40"
                : frame === "open"
                  ? "border border-white/40 bg-white/15"
                  : ""
            }`}
          >
            {art ? (
              <svg viewBox="0 0 32 32" className="size-8 overflow-visible" fill="none" aria-hidden="true">
                {art}
              </svg>
            ) : (
              <BlenderIcon className="h-[30px] w-8" />
            )}
          </button>
        ))}
      </div>
      <div className="ml-auto flex items-center">
        <svg viewBox="0 0 100 18" className="h-[18px] w-[100px]" fill="none" aria-hidden="true">
          <path d="M5 8l4 4H1Z" fill="#fff" />
          <path d="M23 6h3l4-4v14l-4-4h-3Z" fill="#fff" />
          <path d="M32 6.500q2 2.500 0 5M34.500 4.500q3 4.500 0 9" stroke="#ddd" />
          <path d="M54 3.500h8v8H50M57 12v3M53 15.500h8M48 2.500h3v4h-3ZM49.500 7v8.500" stroke="#fff" strokeWidth="1.3" />
          <path d="M71.5 2v14" stroke="#fff" strokeWidth="1.5" />
          <path d="M73 3c3-1 4 1 6 1s3 0 5-.5v6c-4 1-7-2-11-.5Z" fill="#fff" />
          <circle cx="82" cy="12" r="4.5" fill="#d03a2c" />
          <path d="M80 10l4 4M84 10l-4 4" stroke="#fff" strokeWidth="1.5" />
        </svg>
        <time className="text-center text-[12px] leading-[17px]">
          6:02 PM
          <br />
          6/10/2019
        </time>
      </div>
    </footer>
  )
}

export default function App() {
  return (
    <div className="flex h-screen flex-col overflow-hidden bg-[#343434] font-['DejaVu_Sans_Condensed','DejaVu_Sans',sans-serif] text-[11px] leading-4 text-black">
      <TitleBar />
      <InfoHeader />
      <div className="flex min-h-0 flex-1">
        <main className="relative min-w-0 flex-1 bg-[#343434]">
          <UvCanvas />
          <button
            type="button"
            aria-label="Show tool shelf"
            className="absolute top-[22px] left-0 flex h-[14px] w-3 items-center justify-center rounded-r-[4px] bg-[#252525] text-[#999]"
          >
            +
          </button>
        </main>
        <PropertiesRegion />
      </div>
      <EditorHeader />
      <Taskbar />
    </div>
  )
}
